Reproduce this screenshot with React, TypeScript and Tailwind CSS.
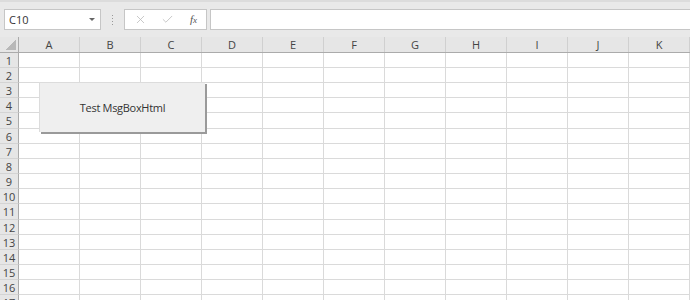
import { X, Check } from 'lucide-react';

const cols = ['A', 'B', 'C', 'D', 'E', 'F', 'G', 'H', 'I', 'J', 'K'];
const rows = Array.from({ length: 17 }, (_, i) => i + 1);

export default function App() {
  return (
    <div
      className="w-[690px] h-[300px] overflow-hidden bg-white relative text-[#444]"
      style={{ fontFamily: '"Open Sans", "Noto Sans", sans-serif' }}
    >
      {/* formula bar */}
      <div className="h-[37px] bg-[#e9e9e9] border-t-[2px] border-[#dcdcdc] flex items-start pt-[7px] pl-[4px]">
        <div className="w-[97px] h-[21px] bg-white border border-[#c6c6c6] flex items-center justify-between pl-[4px] pr-[5px]">
          <span className="text-[11px] leading-none text-[#333]">C10</span>
          <span className="w-0 h-0 border-l-[3px] border-r-[3px] border-t-[3px] border-l-transparent border-r-transparent border-t-[#666]" />
        </div>
        <div className="w-[23px] h-[21px] flex flex-col items-center justify-center gap-[2px]">
          <span className="w-[1px] h-[1px] bg-[#999]" />
          <span className="w-[1px] h-[1px] bg-[#999]" />
          <span className="w-[1px] h-[1px] bg-[#999]" />
          <span className="w-[1px] h-[1px] bg-[#999]" />
        </div>
        <div className="w-[83px] h-[21px] bg-white border border-[#c6c6c6] flex items-center">
          <div className="w-[28px] flex justify-center pl-[2px]">
            <X size={13} strokeWidth={1.5} color="#bdbdbd" />
          </div>
          <div className="w-[28px] flex justify-center">
            <Check size={13} strokeWidth={1.5} color="#bdbdbd" />
          </div>
          <div className="w-[25px] flex justify-center">
            <span className="text-[11px] leading-none italic text-[#555]" style={{ fontFamily: '"Liberation Serif", serif' }}>
              f<span className="text-[9px]">x</span>
            </span>
          </div>
        </div>
        <div className="ml-[3px] flex-1 h-[21px] bg-white border border-[#c6c6c6] border-r-0" />
      </div>

      {/* column headers */}
      <div className="flex h-[16px] bg-[#e6e6e6] border-b border-[#ababab]">
        <div className="w-[19px] shrink-0 h-full border-r border-[#ababab] relative">
          <span className="absolute right-[2px] bottom-[2px] w-[10px] h-[10px] bg-[linear-gradient(135deg,transparent_50%,#b8b8b8_50%)]" />
        </div>
        {cols.map((c) => (
          <div
            key={c}
            className="w-[61px] shrink-0 h-full border-r border-[#d0d0d0] flex items-center justify-center text-[11px] leading-none text-[#444]"
          >
            {c}
          </div>
        ))}
      </div>

      {/* grid */}
      <div className="flex flex-col">
        {rows.map((r) => (
          <div key={r} className={`flex ${r === 5 || r === 11 ? 'h-[16px]' : 'h-[15px]'}`}>
            <div className="w-[19px] shrink-0 h-full bg-[#e6e6e6] border-r border-b border-r-[#ababab] border-b-[#d4d4d4] flex items-center justify-center text-[11px] leading-none text-[#444]">
              {r}
            </div>
            {cols.map((c) => (
              <div key={c} className="w-[61px] shrink-0 h-full border-r border-b border-[#dadada]" />
            ))}
          </div>
        ))}
      </div>

      {/* button */}
      <div className="absolute left-[39px] top-[82px] w-[166px] h-[50px] bg-[#efefef] border-t border-l border-[#dcdcdc] shadow-[2px_2px_0_#9a9a9a] flex items-center justify-center text-[11px] leading-none tracking-[-0.3px] text-[#333]">
        Test MsgBoxHtml
      </div>
    </div>
  );
}
